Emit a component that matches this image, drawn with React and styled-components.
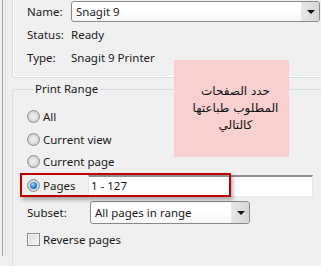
import React from "react";
import styled, { createGlobalStyle } from "styled-components";

const Global = createGlobalStyle`
  html, body { margin: 0; padding: 0; background: #f0f0f0; }
  body { font-family: "Noto Sans", "Open Sans", sans-serif; font-size: 11.5px; color: #1a1a1a; }
  * { box-sizing: border-box; }
`;

const Page = styled.div`
  position: relative;
  width: 321px;
  height: 266px;
  overflow: hidden;
  background: #f0f0f0;
`;

const OuterRail = styled.div`
  margin-left: 2px;
  height: 100%;
  border-left: 1px solid #a0a0a0;
  padding-left: 2px;
`;

const InnerRail = styled.div`
  height: 100%;
  border-left: 1px solid #dcdcdc;
  padding-left: 6px;
`;

const TopGroup = styled.div`
  margin-top: -10px;
  border: 1px solid #d5dfe5;
  border-right: none;
  border-radius: 0 0 0 3px;
  box-shadow: inset 1px -1px 0 #fff;
  padding: 10px 0 9px 14px;
  display: grid;
  grid-template-columns: 44px 1fr;
  grid-template-rows: 21px 26px 20px;
  align-items: center;
`;

const Label = styled.span`
  white-space: nowrap;
  line-height: 16px;
`;

const Value = styled.span`
  white-space: nowrap;
  line-height: 16px;
`;

const Combo = styled.div`
  display: flex;
  align-items: center;
  height: ${(p) => p.$h}px;
  width: ${(p) => p.$w}px;
  border: 1px solid #8a8a8a;
  border-radius: 3px;
  background: linear-gradient(#ffffff, #ffffff 50%, #f6f6f6);
  padding-left: 4px;
  overflow: hidden;
`;

const ComboText = styled.span`
  flex: 1;
  white-space: nowrap;
  line-height: 16px;
`;

const ComboButton = styled.div`
  width: 18px;
  align-self: stretch;
  display: flex;
  align-items: center;
  justify-content: center;
  background: linear-gradient(90deg, #e6e6e6, #d6d6d6);
  border-left: 1px solid #e8e8e8;
`;

const Arrow = styled.div`
  width: 0;
  height: 0;
  border-left: 4px solid transparent;
  border-right: 4px solid transparent;
  border-top: 4px solid #111;
`;

const Fieldset = styled.fieldset`
  margin: 3px 0 0 0;
  padding: 8px 0 20px 14px;
  border: 1px solid #d5dfe5;
  border-right: none;
  border-radius: 3px 0 0 3px;
  min-width: 0;
`;

const Legend = styled.legend`
  padding: 0 2px;
  margin-left: 6px;
  line-height: 16px;
`;

const Row = styled.div`
  display: flex;
  align-items: center;
  height: ${(p) => p.$h}px;
  margin-top: ${(p) => p.$mt || 0}px;
  gap: 3px;
`;

const Radio = styled.span`
  width: 13px;
  height: 13px;
  border-radius: 50%;
  border: 1px solid #8e8f8f;
  background: radial-gradient(circle at 50% 50%, #f2f2f2 0, #e0e0e0 45%, #cfcfcf 70%, #f4f4f4 100%);
  display: flex;
  align-items: center;
  justify-content: center;
  flex: none;
  &::after {
    content: "";
    display: ${(p) => (p.$checked ? "block" : "none")};
    width: 7px;
    height: 7px;
    border-radius: 50%;
    background: radial-gradient(circle at 40% 35%, #a8e0ff 0, #2e8ad8 45%, #0b4e93 100%);
  }
`;

const Check = styled.span`
  width: 13px;
  height: 13px;
  border: 1px solid #8e8f8f;
  background: linear-gradient(135deg, #dcdcdc, #f6f6f6);
  box-shadow: inset 0 0 0 1px #f4f4f4;
  flex: none;
`;

const FieldLabel = styled.span`
  width: ${(p) => p.$w}px;
  flex: none;
  white-space: nowrap;
  line-height: 16px;
`;

const TextBox = styled.div`
  width: ${(p) => p.$w}px;
  height: 22px;
  background: #fff;
  border: 1px solid #e3e9ef;
  border-top: 2px solid #8d8d8d;
  padding-left: 2px;
  display: flex;
  align-items: center;
  line-height: 16px;
`;

const Highlight = styled.div`
  position: absolute;
  left: 20px;
  top: 173px;
  width: 211px;
  height: 24px;
  border: 2px solid #c00000;
  box-shadow: 2px 3px 4px rgba(0, 0, 0, 0.3);
  pointer-events: none;
`;

const Note = styled.div`
  position: absolute;
  left: 174px;
  top: 60px;
  width: 115px;
  height: 97px;
  background: #f8d0d0;
  display: flex;
  flex-direction: column;
  align-items: center;
  justify-content: center;
  text-align: center;
  direction: rtl;
  font-family: "DejaVu Sans", sans-serif;
  font-size: 12px;
  line-height: 17px;
  color: #111;
  padding-left: 8px;
`;

const NoteLine = styled.span`
  white-space: nowrap;
`;

export default function App() {
  return (
    <Page>
      <Global />
      <OuterRail>
        <InnerRail>
          <TopGroup>
            <Label>Name:</Label>
            <Combo $h={21} $w={249}>
              <ComboText>Snagit 9</ComboText>
              <ComboButton>
                <Arrow />
              </ComboButton>
            </Combo>
            <Label>Status:</Label>
            <Value>Ready</Value>
            <Label>Type:</Label>
            <Value>Snagit 9 Printer</Value>
          </TopGroup>
          <Fieldset>
            <Legend>Print Range</Legend>
            <Row $h={23}>
              <Radio />
              <span>All</span>
            </Row>
            <Row $h={22}>
              <Radio />
              <span>Current view</span>
            </Row>
            <Row $h={22}>
              <Radio />
              <span>Current page</span>
            </Row>
            <Row $h={23} $mt={2}>
              <Radio $checked />
              <FieldLabel $w={42}>Pages</FieldLabel>
              <TextBox $w={225}>1 - 127</TextBox>
            </Row>
            <Row $h={23} $mt={4}>
              <FieldLabel $w={60}>Subset:</FieldLabel>
              <Combo $h={23} $w={160}>
                <ComboText>All pages in range</ComboText>
                <ComboButton>
                  <Arrow />
                </ComboButton>
              </Combo>
            </Row>
            <Row $h={22} $mt={4}>
              <Check />
              <span>Reverse pages</span>
            </Row>
          </Fieldset>
        </InnerRail>
      </OuterRail>
      <Note>
        <NoteLine>حدد الصفحات</NoteLine>
        <NoteLine>المطلوب طباعتها</NoteLine>
        <NoteLine>كالتالي</NoteLine>
      </Note>
      <Highlight />
    </Page>
  );
}
